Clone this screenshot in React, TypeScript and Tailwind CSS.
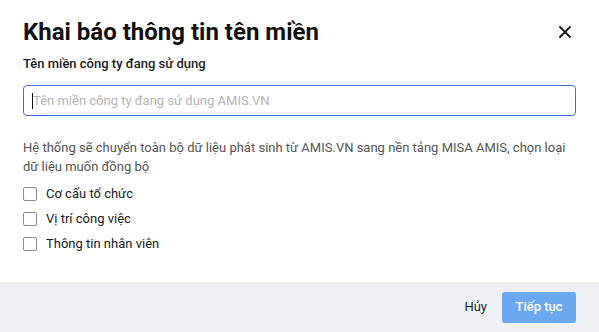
import { X } from "lucide-react";

const options = ["Cơ cấu tổ chức", "Vị trí công việc", "Thông tin nhân viên"];

export default function App() {
  return (
    <div className="w-[599px] h-[332px] bg-white flex flex-col font-['Roboto',sans-serif] text-[#212121]">
      <div className="flex-1 px-[23px]">
        {/* Header */}
        <div className="flex items-center justify-between pt-[16px] h-[47px]">
          <h1 className="text-[24px] font-bold leading-none text-[#111]">Khai báo thông tin tên miền</h1>
          <button className="mr-[1px] text-[#111]">
            <X size={20} strokeWidth={2.2} />
          </button>
        </div>

        {/* Domain input */}
        <div className="mt-[8px] text-[13px] font-medium leading-[18px]">Tên miền công ty đang sử dụng</div>
        <div className="mt-[12px] w-full h-[31px] rounded-[4px] border border-[#3d6fe3] px-[9px] flex items-center text-[13px]">
          <span className="w-px h-[16px] bg-[#111] -ml-[1px]" />
          <span className="text-[#b5b5b5]">Tên miền công ty đang sử dụng AMIS.VN</span>
        </div>

        {/* Description */}
        <p className="mt-[22px] text-[13px] leading-[19px] text-[#555]">
          Hệ thống sẽ chuyển toàn bộ dữ liệu phát sinh từ AMIS.VN sang nền tảng MISA AMIS, chọn loại dữ liệu muốn đồng bộ
        </p>

        <div className="mt-[9px] flex flex-col gap-[7px]">
          {options.map((o) => (
            <label key={o} className="flex items-center gap-[9px] h-[18px] text-[13px]">
              <span className="w-[14px] h-[14px] rounded-[2px] border border-[#8c8c8c] bg-white" />
              <span>{o}</span>
            </label>
          ))}
        </div>
      </div>

      {/* Footer */}
      <div className="h-[50px] bg-[#eef0f4] flex items-center justify-end gap-[15px] px-[23px]">
        <button className="text-[13px] text-[#212121]">Hủy</button>
        <button className="w-[74px] h-[31px] rounded-[3px] bg-[#6ca8f0] text-white text-[13px] font-medium">
          Tiếp tục
        </button>
      </div>
    </div>
  );
}
